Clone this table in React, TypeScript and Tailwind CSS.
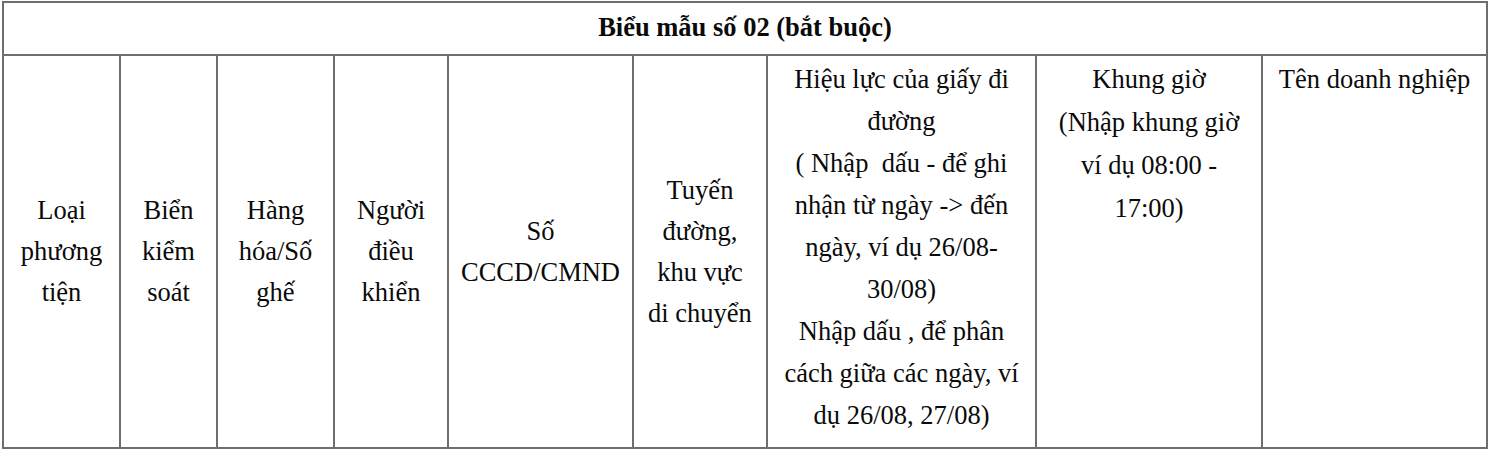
const cols = [
  { lines: ['Loại', 'phương', 'tiện'], align: 'center' },
  { lines: ['Biển', 'kiểm', 'soát'], align: 'center' },
  { lines: ['Hàng', 'hóa/Số', 'ghế'], align: 'center' },
  { lines: ['Người', 'điều', 'khiển'], align: 'center' },
  { lines: ['Số', 'CCCD/CMND'], align: 'center' },
  { lines: ['Tuyến', 'đường,', 'khu vực', 'di chuyển'], align: 'center' },
  {
    lines: [
      'Hiệu lực của giấy đi',
      'đường',
      '( Nhập  dấu - để ghi',
      'nhận từ ngày -> đến',
      'ngày, ví dụ 26/08-',
      '30/08)',
      'Nhập dấu , để phân',
      'cách giữa các ngày, ví',
      'dụ 26/08, 27/08)',
    ],
    align: 'top',
  },
  { lines: ['Khung giờ', '(Nhập khung giờ', 'ví dụ 08:00 -', '17:00)'], align: 'top' },
  { lines: ['Tên doanh nghiệp'], align: 'top' },
]

export default function App() {
  return (
    <div className="w-[1492px] h-[452px] bg-white overflow-hidden pt-px pl-[2px] font-['Liberation_Serif','Times_New_Roman',serif] text-[#0a0a0a] text-[26.5px]">
      <div className="w-[1486px] h-[448px] border-2 border-[#6e6e6e] grid grid-cols-[117px_97px_117px_114px_185px_134px_269px_226px_1fr] grid-rows-[53px_1fr]">
        {/* title row */}
        <div className="col-span-9 border-b-2 border-[#6e6e6e] flex items-center justify-center pb-[2px] font-bold leading-none">
          Biểu mẫu số 02 (bắt buộc)
        </div>

        {cols.map((c, i) => (
          <div
            key={i}
            className={
              (i < cols.length - 1 ? 'border-r-2 border-[#6e6e6e] ' : '') +
              (c.align === 'center'
                ? 'flex flex-col items-center justify-center leading-[41px]'
                : i === 7
                ? 'flex flex-col items-center justify-start pt-[2px] leading-[43px]'
                : 'flex flex-col items-center justify-start pt-[2px] leading-[42px]')
            }
          >
            {c.lines.map((l, j) => (
              <div key={j} className="whitespace-pre text-center">
                {l}
              </div>
            ))}
          </div>
        ))}
      </div>
    </div>
  )
}
